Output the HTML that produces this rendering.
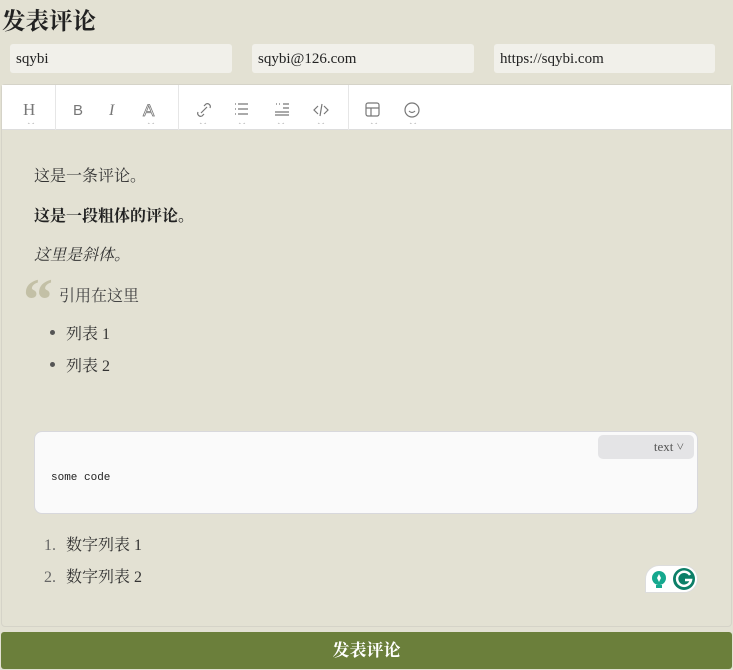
<!DOCTYPE html>
<html><head><meta charset="utf-8"><style>
*{margin:0;padding:0;box-sizing:border-box}
body{width:733px;height:670px;background:#e3e1d3;font-family:"Liberation Serif","Noto Serif CJK SC",serif;color:#333;position:relative;overflow:hidden}
h1{position:absolute;left:2px;top:2px;font-size:23.5px;font-weight:bold;color:#222;font-family:"Liberation Serif","Noto Serif CJK SC",serif}
.in{position:absolute;top:44px;height:29px;background:#f1f0ea;border-radius:3px;font-size:15px;padding:7px 6px;color:#222}
.ed{position:absolute;left:1px;top:84px;width:731px;height:543px;border:1px solid #d5d3c8;border-radius:4px}
.tb{height:45px;background:#fff;border-bottom:1px solid #ddd;position:relative}
.tb svg{position:absolute;top:15px}
.sep{position:absolute;top:0;width:1px;height:45px;background:#e6e6e6}
.c{position:absolute;font-size:16px;color:#333}
.code{position:absolute;left:34px;top:431px;width:664px;height:83px;background:#fafafa;border:1px solid #d8d8dc;border-radius:8px}
.lang{position:absolute;right:3px;top:3px;width:96px;height:24px;background:#e4e4e6;border-radius:5px;font-size:13px;color:#555;text-align:right;padding:4px 10px 0 0}
.btn{position:absolute;left:1px;top:632px;width:731px;height:37px;background:#6b7f3b;border-radius:3px;color:#fff;font-weight:bold;font-size:17px;text-align:center;line-height:37px}
</style></head><body>
<h1>发表评论</h1>
<div class="in" style="left:10px;width:222px">sqybi</div>
<div class="in" style="left:252px;width:222px">sqybi@126.com</div>
<div class="in" style="left:494px;width:221px">https://sqybi.com</div>
<div class="ed">
<div class="tb">
<svg width="440" height="28" viewBox="0 0 440 28" style="left:-1px;top:11px" fill="none" stroke="#777" stroke-width="1.2">
<text x="22" y="19" font-size="17" fill="#777" stroke="none" font-family="Liberation Serif">H</text>
<text x="72" y="19" font-size="15" fill="#777" stroke="none" font-family="Liberation Sans">B</text>
<text x="108" y="19" font-size="16" font-style="italic" fill="#777" stroke="none" font-family="Liberation Serif">I</text>
<text x="142" y="20" font-size="17" fill="none" stroke="#777" stroke-width="0.8" font-family="Liberation Sans">A</text>
<path d="M200 17l6-6M197 16a3 3 0 0 0 4 4l2-2M209 12a3 3 0 0 0-4-4l-2 2"/>
<path d="M237 8h10M237 13h10M237 18h10M234 8h1M234 13h1M234 18h1"/>
<path d="M275 8l1 0M278 8h1M282 8h6M282 12h6M274 16h14M274 19h14"/>
<path d="M317 10l-4 4 4 4M323 10l4 4-4 4M321 8l-2 12"/>
<rect x="365" y="7" width="13" height="13" rx="2"/><path d="M365 12h13M370 12v8"/>
<circle cx="411" cy="14" r="7"/><path d="M408 15q3 3 6 0"/>
<path d="M27 27l3 2 3-2M147 27l3 2 3-2M199 27l3 2 3-2M238 27l3 2 3-2M277 27l3 2 3-2M317 27l3 2 3-2M370 27l3 2 3-2M409 27l3 2 3-2" stroke="#bbb" stroke-width="0.8"/>
</svg>
<div class="sep" style="left:53px"></div><div class="sep" style="left:176px"></div><div class="sep" style="left:346px"></div>
</div>
</div>
<div class="c" style="left:34px;top:163px">这是一条评论。</div>
<div class="c" style="left:34px;top:203px;font-weight:bold;color:#222">这是一段粗体的评论。</div>
<div class="c" style="left:34px;top:242px;font-style:italic">这里是斜体。</div>
<div style="position:absolute;left:23px;top:270px;font-size:60px;font-weight:bold;color:#c3c0a6;font-family:'Liberation Serif',serif;line-height:60px">“</div>
<div class="c" style="left:59px;top:283px;color:#444">引用在这里</div>
<div style="position:absolute;left:50px;top:330px;width:5px;height:5px;border-radius:50%;background:#555"></div>
<div style="position:absolute;left:50px;top:362px;width:5px;height:5px;border-radius:50%;background:#555"></div>
<div class="c" style="left:66px;top:321px">列表 1</div>
<div class="c" style="left:66px;top:353px">列表 2</div>
<div class="code"><div class="lang">text ˅</div>
<div style="position:absolute;left:16px;top:40px;font-family:'Liberation Mono',monospace;font-size:11px;color:#222">some code</div></div>
<div class="c" style="left:44px;top:532px"><span style="color:#666;display:inline-block;width:22px">1.</span>数字列表 1</div>
<div class="c" style="left:44px;top:564px"><span style="color:#666;display:inline-block;width:22px">2.</span>数字列表 2</div>
<div style="position:absolute;left:645px;top:565px;width:53px;height:28px;background:#fff;border-radius:14px 14px 14px 0;border:1px solid #ddd">
<svg width="53" height="28" style="position:absolute;left:-1px;top:-1px">
<circle cx="14" cy="13" r="7" fill="#15a88e"/><rect x="11" y="20" width="6" height="3" fill="#15a88e"/><path d="M14 9l2 4-2 4-2-4z" fill="#fff"/>
<circle cx="39" cy="14" r="11" fill="#0c7f68"/><path d="M45 10a7 7 0 1 0 1 5h-6" stroke="#fff" stroke-width="2.5" fill="none"/>
</svg></div>
<div class="btn">发表评论</div>
</body></html>
